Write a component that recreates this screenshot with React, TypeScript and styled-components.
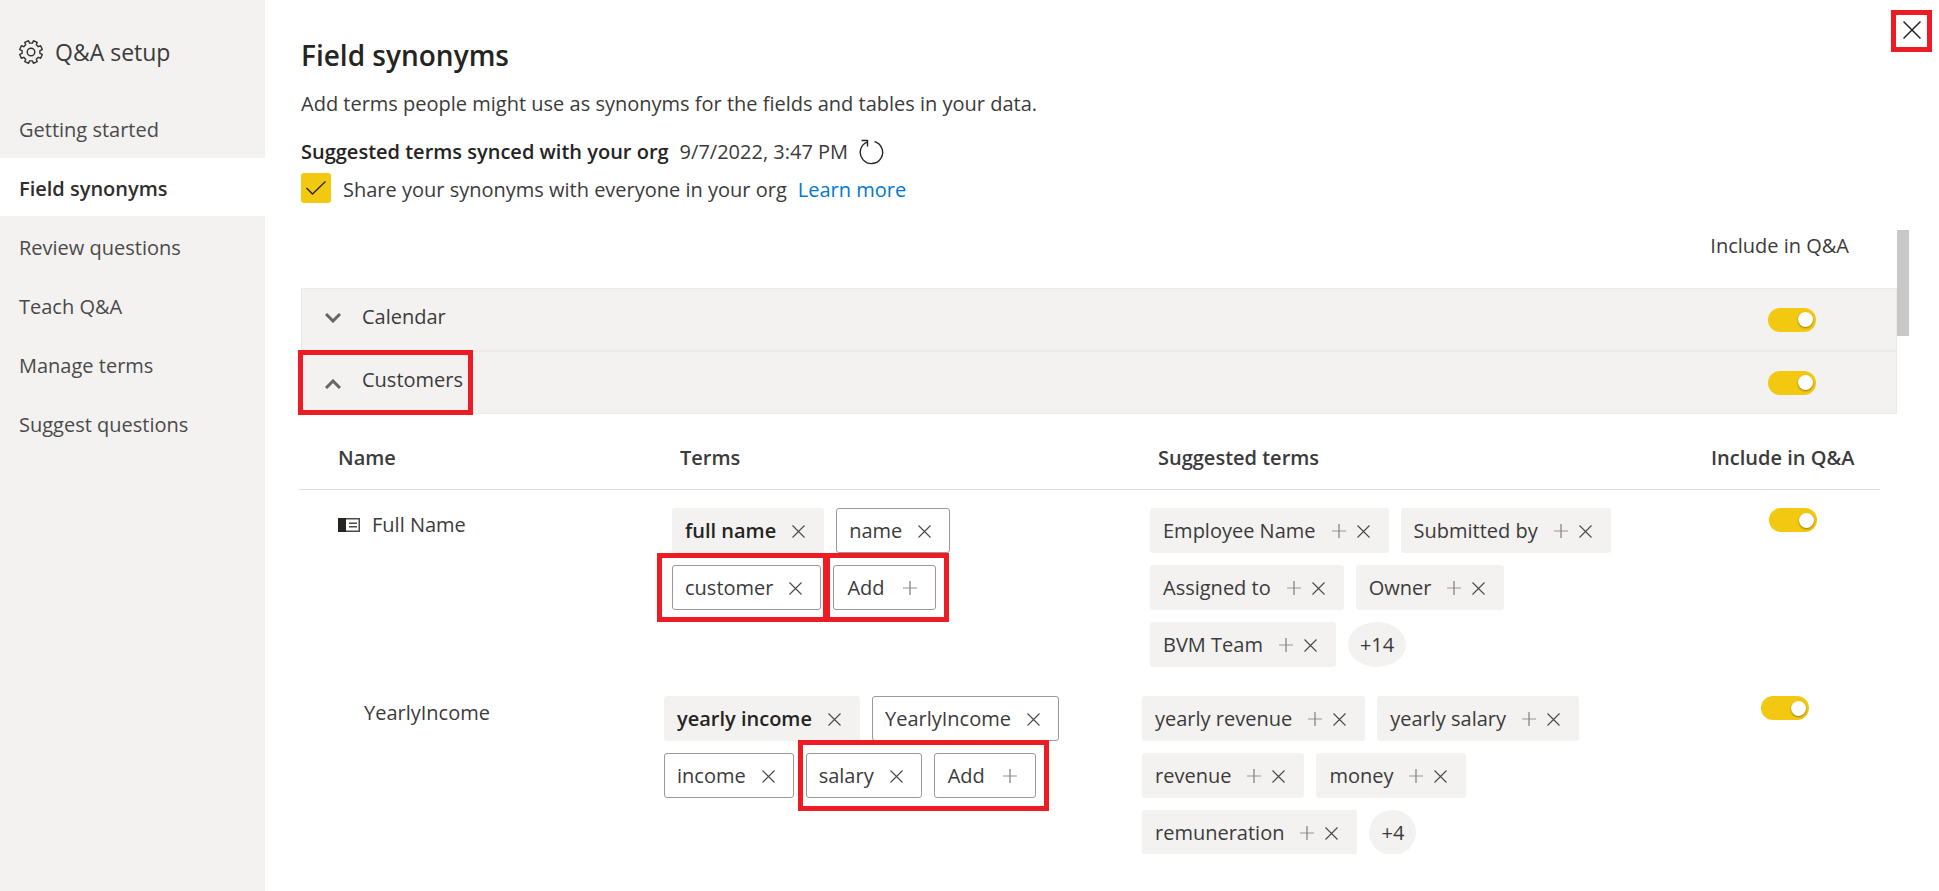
import React, { useId, useState } from "react";
import styled, { createGlobalStyle, css } from "styled-components";

const GlobalStyle = createGlobalStyle`
  *, *::before, *::after { box-sizing: border-box; }
  body {
    margin: 0;
    background: #ffffff;
    color: #3b3b3b;
    font: 400 20px/30px "Open Sans", "Noto Sans", sans-serif;
  }
  button, input { font: inherit; color: inherit; margin: 0; }
`;

const Page = styled.div`
  display: flex;
  height: 100vh;
  overflow: hidden;
`;

const Sidebar = styled.aside`
  flex: 0 0 265px;
  padding-top: 36px;
  background: #f3f2f1;
`;

const SidebarTitle = styled.div`
  display: flex;
  align-items: center;
  gap: 12px;
  margin-bottom: 31px;
  padding-left: 19px;
  font-size: 23px;
  line-height: 32px;
`;

const NavList = styled.nav`
  display: flex;
  flex-direction: column;
  gap: 1px;
`;

const NavLink = styled.a<{ $active?: boolean }>`
  height: 58px;
  padding: 16px 19px 0;
  color: ${(p) => (p.$active ? "#2f2e2d" : "#4a4a4a")};
  background: ${(p) => (p.$active ? "#ffffff" : "transparent")};
  font-weight: ${(p) => (p.$active ? 600 : 400)};
  text-decoration: none;
`;

const Main = styled.main`
  position: relative;
  display: flex;
  flex: 1;
  flex-direction: column;
  min-width: 0;
  padding-bottom: 37px;
`;

const Intro = styled.header`
  padding: 35px 120px 0 36px;
`;

const Heading = styled.h1`
  margin: 0 0 14px;
  color: #252423;
  font-size: 28px;
  font-weight: 600;
  line-height: 40px;
`;

const Description = styled.p`
  margin: 0 0 18px;
`;

const SyncLine = styled.div`
  display: flex;
  align-items: center;
  gap: 11px;
  height: 30px;
  margin-bottom: 6px;
`;

const SyncLabel = styled.span`
  color: #252423;
  font-weight: 600;
`;

const ShareLine = styled.div`
  display: flex;
  align-items: center;
  gap: 11px;
  height: 30px;
`;

const ShareLabel = styled.label`
  display: flex;
  align-items: center;
  gap: 12px;
`;

const ShareText = styled.span`
  padding-top: 3px;
`;

const TickBox = styled.span`
  display: grid;
  width: 30px;
  height: 30px;

  > * { grid-area: 1 / 1; }
  > svg { place-self: center; pointer-events: none; }
`;

const TickInput = styled.input`
  width: 30px;
  height: 30px;
  border-radius: 3px;
  background: #f2c811;
  appearance: none;
`;

const LearnMore = styled.a`
  padding-top: 3px;
  color: #0078d4;
  text-decoration: none;
`;

const IconButton = styled.button`
  display: flex;
  flex: none;
  align-items: center;
  justify-content: center;
  padding: 0;
  border: 0;
  background: none;
  cursor: pointer;
`;

const CloseSlot = styled.div`
  position: absolute;
  top: 21px;
  right: 18px;
`;

const Callout = styled.span<{ $inset: string }>`
  position: absolute;
  z-index: 1;
  inset: ${(p) => p.$inset};
  border: 5px solid #ed1c24;
  pointer-events: none;
`;

const Marked = styled.span`
  position: relative;
  display: flex;
  gap: 12px;
`;

const Body = styled.div`
  display: flex;
  flex: 1;
  min-height: 0;
  margin-top: 27px;
  padding-right: 30px;
`;

const Scroller = styled.div`
  flex: 1;
  min-width: 0;
  overflow: hidden;
  padding-left: 34px;
`;

const ScrollTrack = styled.div`
  flex: 0 0 12px;
`;

const ScrollThumb = styled.div`
  height: 106px;
  background: #c8c8c8;
`;

const IncludeCaption = styled.div`
  margin-bottom: 27px;
  padding: 1px 48px 0 0;
  text-align: right;
`;

const TableHead = styled.div`
  display: flex;
  align-items: center;
  justify-content: space-between;
  height: 63px;
  margin-left: 2px;
  padding-right: 80px;
  border: 1px solid #eaeaea;
  background: #f3f2f1;
`;

const Expander = styled.button<{ $open?: boolean }>`
  position: relative;
  display: flex;
  gap: 21px;
  align-self: stretch;
  padding: 13px 10px 0 23px;
  border: 0;
  background: none;
  text-align: left;
  cursor: pointer;

  > svg { margin-top: ${(p) => (p.$open ? 14 : 11)}px; }
`;

const Toggle = styled.input`
  display: flex;
  flex: none;
  align-items: center;
  justify-content: flex-start;
  width: 48px;
  height: 24px;
  padding: 0 3px;
  border-radius: 12px;
  background: #a6a6a6;
  appearance: none;
  cursor: pointer;

  &::before {
    width: 15px;
    height: 15px;
    border-radius: 50%;
    background: #ffffff;
    box-shadow: 0 1px 2px rgba(0, 0, 0, 0.4);
    content: "";
  }

  &:checked {
    justify-content: flex-end;
    background: #f2c811;
  }
`;

const FieldTable = styled.table`
  width: calc(100% - 17px);
  border-collapse: collapse;
  table-layout: fixed;
`;

const NameCol = styled.col`
  width: 365px;
`;
const TermsCol = styled.col`
  width: 478px;
`;
const IncludeCol = styled.col`
  width: 185px;
`;

const HeadCell = styled.th`
  padding: 29px 0 16px 16px;
  border-bottom: 1px solid #dedede;
  font-weight: 600;
  text-align: left;

  &:first-child { padding-left: 39px; }
`;

const Cell = styled.td<{ $indent?: boolean }>`
  padding: 18px 62px 11px ${(p) => (p.$indent ? 8 : 0)}px;
  vertical-align: top;
`;

const NameCell = styled.th<{ $indent?: boolean }>`
  padding: 20px 0 0 ${(p) => (p.$indent ? 39 : 65)}px;
  font-weight: 400;
  text-align: left;
  vertical-align: top;
`;

const NameLine = styled.span`
  display: flex;
  align-items: center;
  gap: 12px;
`;

const ToggleCell = styled.td<{ $indent?: boolean }>`
  padding: 18px 0 0 ${(p) => (p.$indent ? 74 : 66)}px;
  vertical-align: top;
`;

const ChipList = styled.div`
  display: flex;
  flex-wrap: wrap;
  gap: 12px;
`;

const chipBox = css`
  display: flex;
  align-items: center;
  height: 45px;
  border: 1px solid transparent;
  border-radius: 3px;
  white-space: nowrap;
`;

type Tone = "filled" | "outlined";

const ChipBox = styled.span<{ $tone: Tone; $strong?: boolean }>`
  ${chipBox}
  gap: 11px;
  padding: 1px 18px 0 12px;
  border-color: ${(p) => (p.$tone === "outlined" ? "#999999" : "transparent")};
  background: ${(p) => (p.$tone === "outlined" ? "#ffffff" : "#f3f2f1")};
  color: ${(p) => (p.$strong ? "#252423" : "#3b3b3b")};
  font-weight: ${(p) => (p.$strong ? 600 : 400)};
`;

const ChipText = styled.span`
  margin-right: 5px;
`;

const AddButton = styled.button`
  ${chipBox}
  gap: 18px;
  padding: 1px 18px 0 13px;
  border-color: #999999;
  background: #ffffff;
  cursor: pointer;
`;

const MoreButton = styled.button`
  height: 45px;
  padding: 1px 12px 0;
  border: 0;
  border-radius: 50%;
  background: #f3f2f1;
  cursor: pointer;
`;

const CrossIcon = ({ size }: { size: number }) => (
  <svg
    width={size}
    height={size}
    viewBox={`0 0 ${size} ${size}`}
    fill="none"
    stroke={size > 13 ? "#252423" : "#484848"}
    strokeWidth={size > 13 ? 1.5 : 1.1}
  >
    <path d={`M.5.5L${size - 0.5} ${size - 0.5}M${size - 0.5}.5L.5 ${size - 0.5}`} />
  </svg>
);

const PlusIcon = () => (
  <svg width="14" height="14" viewBox="0 0 14 14" fill="none">
    <path d="M0 7h14" stroke="#ababab" strokeWidth="1.3" />
    <path d="M7 0v14" stroke="#858585" strokeWidth="1.3" />
  </svg>
);

const ChevronIcon = ({ up }: { up?: boolean }) => (
  <svg width="16" height="10" viewBox="0 0 16 10" fill="none" stroke="#666" strokeWidth="3">
    <path d={up ? "M1 9l7-7 7 7" : "M1 1l7 7 7-7"} />
  </svg>
);

const gearOutline = (() => {
  const points: string[] = [];
  for (let i = 0; i < 8; i++) {
    const a = (i * 45 * Math.PI) / 180 - Math.PI / 2 + Math.PI / 8;
    [
      [-0.24, 9],
      [-0.18, 11.5],
      [0.18, 11.5],
      [0.24, 9],
    ].forEach(([d, r]) => points.push(`${(12 + r * Math.cos(a + d)).toFixed(2)} ${(12 + r * Math.sin(a + d)).toFixed(2)}`));
  }
  return `M${points.join("L")}Z`;
})();

const GearIcon = () => (
  <svg width="24" height="24" viewBox="0 0 24 24" fill="none" stroke="#333" strokeWidth="1.4" strokeLinejoin="round">
    <path d={gearOutline} />
    <circle cx="12" cy="12" r="3.8" />
  </svg>
);

const RefreshIcon = () => (
  <svg width="25" height="26" viewBox="0 0 25 26" fill="none" stroke="#252423" strokeWidth="1.4">
    <path d="M15.500 2.600A11.200 11.200 0 1 1 8 3.100" />
    <path d="M2.500 1.500h6v6" />
  </svg>
);

const TickIcon = () => (
  <svg width="20" height="14" viewBox="0 0 20 14" fill="none" stroke="#252423" strokeWidth="1.3">
    <path d="M.5 7l6 6L19.500.5" />
  </svg>
);

const CardIcon = () => (
  <svg width="22" height="14" viewBox="0 0 22 14" fill="none" stroke="#4a4948" strokeWidth="1.5">
    <rect x=".75" y=".75" width="20.500" height="12.500" />
    <path d="M0 0h8v14H0z" fill="#252423" stroke="none" />
    <path d="M11 5.250h8M11 8.750h8" />
  </svg>
);

interface Term {
  text: string;
  strong?: boolean;
  suggested?: boolean;
}

const Chip = ({ text, strong, suggested }: Term) => (
  <ChipBox $tone={strong || suggested ? "filled" : "outlined"} $strong={strong}>
    <ChipText>{text}</ChipText>
    {suggested && (
      <IconButton type="button" aria-label={`Add ${text}`}>
        <PlusIcon />
      </IconButton>
    )}
    <IconButton type="button" aria-label={`Remove ${text}`}>
      <CrossIcon size={13} />
    </IconButton>
  </ChipBox>
);

const AddTerm = () => (
  <AddButton type="button">
    Add
    <PlusIcon />
  </AddButton>
);

const Switch = ({ label }: { label: string }) => {
  const [on, setOn] = useState(true);
  return <Toggle type="checkbox" role="switch" aria-label={label} checked={on} onChange={() => setOn(!on)} />;
};

const navItems = ["Getting started", "Field synonyms", "Review questions", "Teach Q&A", "Manage terms", "Suggest questions"];
const nameSuggestions = ["Employee Name", "Submitted by", "Assigned to", "Owner", "BVM Team"];
const incomeSuggestions = ["yearly revenue", "yearly salary", "revenue", "money", "remuneration"];

export default function App() {
  const shareId = useId();
  return (
    <Page>
      <GlobalStyle />
      <Sidebar>
        <SidebarTitle>
          <GearIcon />
          Q&amp;A setup
        </SidebarTitle>
        <NavList>
          {navItems.map((item) => (
            <NavLink key={item} href="#" $active={item === "Field synonyms"}>
              {item}
            </NavLink>
          ))}
        </NavList>
      </Sidebar>

      <Main>
        <CloseSlot>
          <IconButton type="button" aria-label="Close">
            <CrossIcon size={18} />
          </IconButton>
          <Callout $inset="-11px -11px -13px -12px" />
        </CloseSlot>

        <Intro>
          <Heading>Field synonyms</Heading>
          <Description>Add terms people might use as synonyms for the fields and tables in your data.</Description>
          <SyncLine>
            <SyncLabel>Suggested terms synced with your org</SyncLabel>
            <span>9/7/2022, 3:47 PM</span>
            <IconButton type="button" aria-label="Sync now">
              <RefreshIcon />
            </IconButton>
          </SyncLine>
          <ShareLine>
            <ShareLabel htmlFor={shareId}>
              <TickBox>
                <TickInput id={shareId} type="checkbox" defaultChecked />
                <TickIcon />
              </TickBox>
              <ShareText>Share your synonyms with everyone in your org</ShareText>
            </ShareLabel>
            <LearnMore href="#">Learn more</LearnMore>
          </ShareLine>
        </Intro>

        <Body>
          <Scroller>
            <IncludeCaption>Include in Q&amp;A</IncludeCaption>
            <TableHead>
              <Expander type="button" aria-expanded={false}>
                <ChevronIcon />
                Calendar
              </Expander>
              <Switch label="Include Calendar in Q&A" />
            </TableHead>
            <TableHead>
              <Expander type="button" aria-expanded $open>
                <ChevronIcon up />
                Customers
                <Callout $inset="-2px 0 -2px -4px" />
              </Expander>
              <Switch label="Include Customers in Q&A" />
            </TableHead>

            <FieldTable>
              <colgroup>
                <NameCol />
                <TermsCol />
                <col />
                <IncludeCol />
              </colgroup>
              <thead>
                <tr>
                  <HeadCell>Name</HeadCell>
                  <HeadCell>Terms</HeadCell>
                  <HeadCell>Suggested terms</HeadCell>
                  <HeadCell>Include in Q&amp;A</HeadCell>
                </tr>
              </thead>
              <tbody>
                <tr>
                  <NameCell scope="row" $indent>
                    <NameLine>
                      <CardIcon />
                      Full Name
                    </NameLine>
                  </NameCell>
                  <Cell $indent>
                    <ChipList>
                      <Chip text="full name" strong />
                      <Chip text="name" />
                      <Marked>
                        <Chip text="customer" />
                        <Callout $inset="-12px -7px -12px -15px" />
                      </Marked>
                      <Marked>
                        <AddTerm />
                        <Callout $inset="-12px -13px -12px -8px" />
                      </Marked>
                    </ChipList>
                  </Cell>
                  <Cell $indent>
                    <ChipList>
                      {nameSuggestions.map((t) => (
                        <Chip key={t} text={t} suggested />
                      ))}
                      <MoreButton type="button">+14</MoreButton>
                    </ChipList>
                  </Cell>
                  <ToggleCell $indent>
                    <Switch label="Include Full Name in Q&A" />
                  </ToggleCell>
                </tr>
                <tr>
                  <NameCell scope="row">YearlyIncome</NameCell>
                  <Cell>
                    <ChipList>
                      <Chip text="yearly income" strong />
                      <Chip text="YearlyIncome" />
                      <Chip text="income" />
                      <Marked>
                        <Chip text="salary" />
                        <AddTerm />
                        <Callout $inset="-13px -13px -13px -8px" />
                      </Marked>
                    </ChipList>
                  </Cell>
                  <Cell>
                    <ChipList>
                      {incomeSuggestions.map((t) => (
                        <Chip key={t} text={t} suggested />
                      ))}
                      <MoreButton type="button">+4</MoreButton>
                    </ChipList>
                  </Cell>
                  <ToggleCell>
                    <Switch label="Include YearlyIncome in Q&A" />
                  </ToggleCell>
                </tr>
              </tbody>
            </FieldTable>
          </Scroller>
          <ScrollTrack>
            <ScrollThumb />
          </ScrollTrack>
        </Body>
      </Main>
    </Page>
  );
}
